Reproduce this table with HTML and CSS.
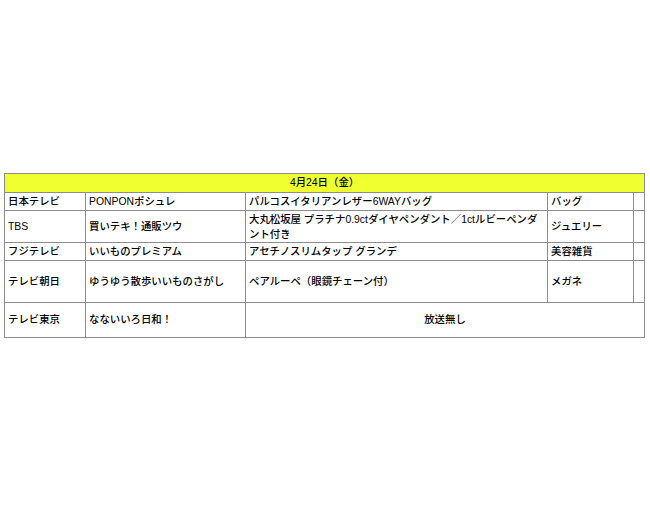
FILE: index.html
```html
<!DOCTYPE html>
<html lang="ja">
<head>
<meta charset="utf-8">
<link rel="stylesheet" href="styles.css">
</head>
<body>
<div class="page">
<table class="schedule">
  <colgroup>
    <col class="c-station">
    <col class="c-program">
    <col class="c-item">
    <col class="c-genre">
    <col class="c-extra">
  </colgroup>
  <tr class="r-head"><td colspan="5" class="date">4月24日（金）</td></tr>
  <tr class="r-18"><td>日本テレビ</td><td>PONPONポシュレ</td><td>パルコスイタリアンレザー6WAYバッグ</td><td>バッグ</td><td></td></tr>
  <tr class="r-32"><td>TBS</td><td>買いテキ！通販ツウ</td><td class="multi">大丸松坂屋 プラチナ0.9ctダイヤペンダント／1ctルビーペンダ<br>ント付き</td><td>ジュエリー</td><td></td></tr>
  <tr class="r-18"><td>フジテレビ</td><td>いいものプレミアム</td><td>アセチノスリムタップ グランデ</td><td>美容雑貨</td><td></td></tr>
  <tr class="r-42"><td>テレビ朝日</td><td>ゆうゆう散歩いいものさがし</td><td>ペアルーペ（眼鏡チェーン付）</td><td>メガネ</td><td></td></tr>
  <tr class="r-35"><td>テレビ東京</td><td>なないいろ日和！</td><td colspan="3" class="center">放送無し</td></tr>
</table>
</div>
</body>
</html>
```
FILE: styles.css
```css
html, body {
  margin: 0;
  padding: 0;
  background: #ffffff;
}
.page {
  padding: 173px 0 0 4px;
}
.schedule {
  border-collapse: collapse;
  table-layout: fixed;
  width: 641px;
  font-family: "Liberation Sans", "Noto Sans CJK JP", sans-serif;
  font-size: 10.4px;
  font-weight: 500;
  color: #000;
}
.c-station { width: 81px; }
.c-program { width: 160px; }
.c-item { width: 302px; }
.c-genre { width: 86px; }
.c-extra { width: 11px; }
.schedule td {
  border: 1px solid #8c8c8c;
  padding: 0 3px;
  vertical-align: middle;
  white-space: nowrap;
  line-height: 14px;
  overflow: hidden;
}
.schedule td.multi {
  line-height: 15px;
}
.r-head td {
  height: 18px;
  background: #f0ff30;
  text-align: center;
}
.r-18 td { height: 17px; }
.r-32 td { height: 31px; }
.r-42 td { height: 41px; }
.r-35 td { height: 34px; }
.center { text-align: center; }
```
